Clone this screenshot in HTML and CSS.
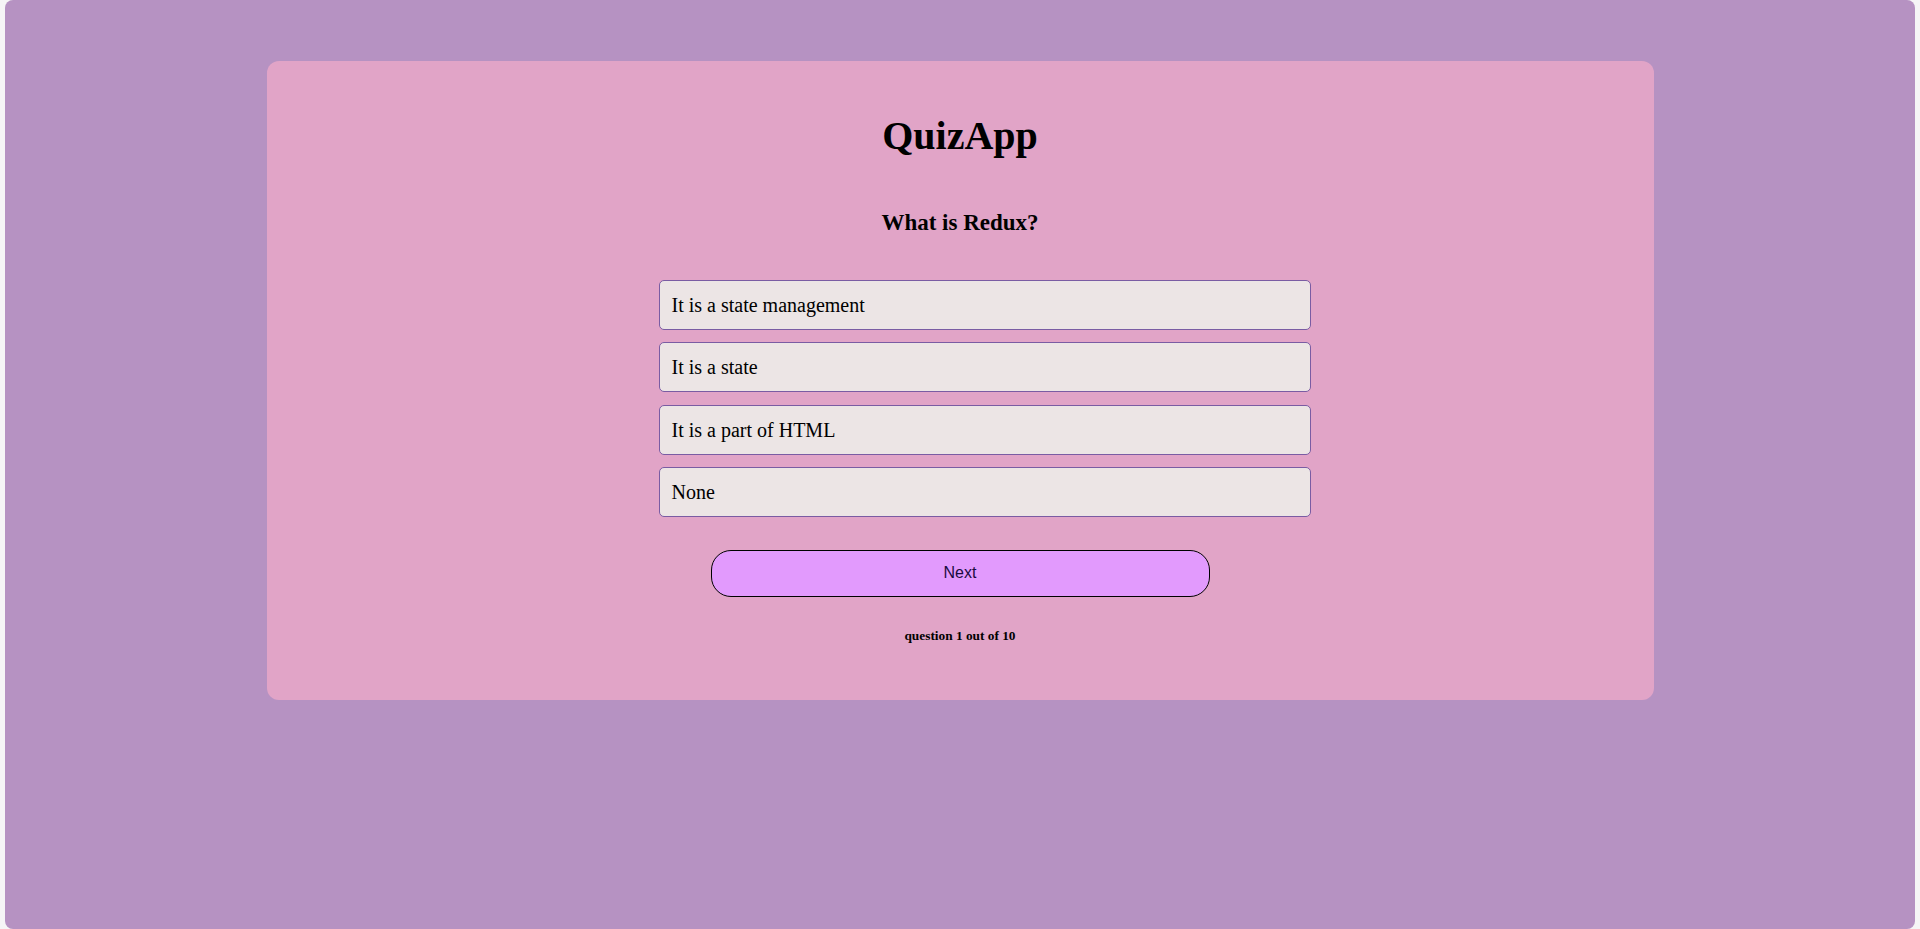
FILE: index.html
```html
<!DOCTYPE html>
<html>
<head>
<meta charset="utf-8">
<title>QuizApp</title>
<link rel="stylesheet" href="styles.css">
</head>
<body>
<div class="app">
  <div class="card">
    <h1 class="title">QuizApp</h1>
    <h2 class="question">What is Redux?</h2>
    <ul class="options">
      <li class="option">It is a state management</li>
      <li class="option">It is a state</li>
      <li class="option">It is a part of HTML</li>
      <li class="option">None</li>
    </ul>
    <button class="next">Next</button>
    <h5 class="progress">question 1 out of 10</h5>
  </div>
</div>
</body>
</html>
```
FILE: styles.css
```css
html, body {
  margin: 0;
  padding: 0;
  background: #f6f5f6;
  font-family: "Liberation Serif", "Times New Roman", serif;
}

.app {
  margin: 0 5px;
  height: 929px;
  box-sizing: border-box;
  background: #b692c2;
  border-radius: 8px;
  padding-top: 61px;
  overflow: hidden;
}

.card {
  width: 1387px;
  margin: 0 auto;
  background: #e1a4c7;
  border-radius: 12px;
  box-sizing: border-box;
  padding: 53px 0 57px;
  display: flex;
  flex-direction: column;
  align-items: center;
}

.title {
  margin: 0;
  font-size: 40px;
  font-weight: bold;
  line-height: 44px;
  color: #000;
}

.question {
  margin: 52px 0 0;
  font-size: 23px;
  line-height: 26px;
  font-weight: bold;
  color: #000;
}

.options {
  list-style: none;
  margin: 44px 0 0;
  padding: 0 0 0 49px;
  display: flex;
  flex-direction: column;
  gap: 12.33px;
}

.option {
  width: 652px;
  box-sizing: border-box;
  height: 50px;
  padding: 12px 12px;
  font-size: 20px;
  line-height: 24px;
  background: #ece5e5;
  border: 1px solid #7a5ca3;
  border-radius: 5px;
  color: #000;
}

.next {
  margin-top: 33px;
  width: 499px;
  height: 47px;
  box-sizing: border-box;
  background: #e29afd;
  border: 1px solid #000;
  border-radius: 20px;
  font-family: "Liberation Sans", Arial, sans-serif;
  font-size: 16px;
  color: #1a0a40;
  padding: 0;
}

.progress {
  margin: 31px 0 0;
  font-size: 13.33px;
  line-height: 15px;
  font-weight: bold;
  color: #000;
}
```
